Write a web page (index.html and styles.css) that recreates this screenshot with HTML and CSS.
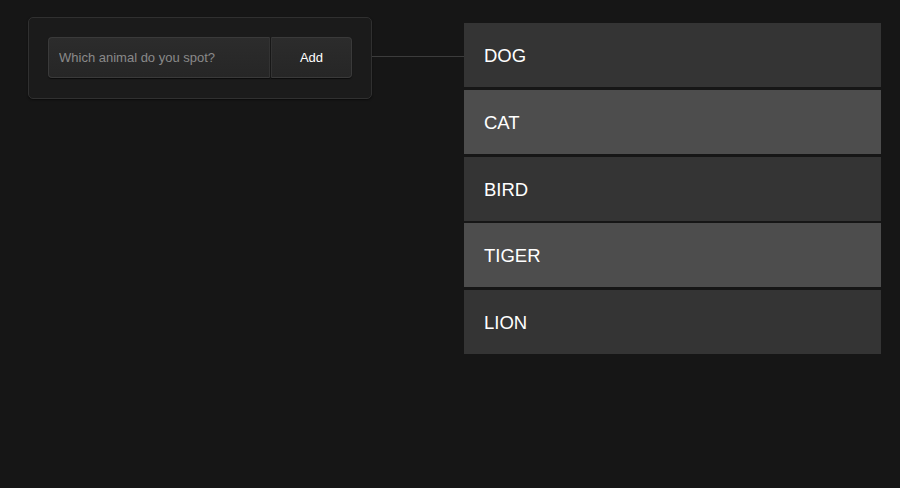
FILE: index.html
```html
<!DOCTYPE html>
<html>
<head>
<meta charset="utf-8">
<link rel="stylesheet" href="styles.css">
</head>
<body>
<div class="stage">
  <div class="panel">
    <form class="add-form" onsubmit="return false">
      <input class="field" type="text" placeholder="Which animal do you spot?">
      <button class="add-btn" type="button">Add</button>
    </form>
  </div>
  <div class="connector"></div>
  <ul class="animals">
    <li class="animal">DOG</li>
    <li class="animal alt">CAT</li>
    <li class="animal">BIRD</li>
    <li class="animal alt">TIGER</li>
    <li class="animal">LION</li>
  </ul>
</div>
</body>
</html>
```

FILE: styles.css
```css
html, body {
  margin: 0;
  padding: 0;
  background: #161616;
  font-family: "Liberation Sans", Arial, sans-serif;
}
.stage {
  display: flex;
  align-items: flex-start;
  padding: 17px 0 0 28px;
}
.panel {
  box-sizing: border-box;
  width: 344px;
  height: 82px;
  padding: 19px 19px 0 19px;
  background: #1b1b1b;
  border: 1px solid #303030;
  border-radius: 5px;
  box-shadow: 0 1px 2px rgba(0,0,0,0.5);
}
.add-form {
  display: flex;
  height: 41px;
  margin: 0;
  gap: 1px;
}
.field {
  box-sizing: border-box;
  width: 222px;
  height: 41px;
  margin: 0;
  padding: 0 10px;
  background: linear-gradient(#2c2c2c, #262626);
  border: 1px solid #3a3a3a;
  border-right-color: #333;
  border-radius: 4px 0 0 4px;
  color: #ddd;
  font-family: "Liberation Sans", Arial, sans-serif;
  font-size: 13px;
  outline: none;
  box-shadow: 0 1px 1px rgba(0,0,0,0.6);
}
.field::placeholder {
  color: #8a8a8a;
}
.add-btn {
  box-sizing: border-box;
  width: 81px;
  height: 41px;
  margin: 0;
  padding: 0;
  background: linear-gradient(#2c2c2c, #262626);
  border: 1px solid #3a3a3a;
  border-left-color: #333;
  border-radius: 0 4px 4px 0;
  color: #fff;
  font-family: "Liberation Sans", Arial, sans-serif;
  font-size: 13px;
  box-shadow: 0 1px 1px rgba(0,0,0,0.6);
}
.connector {
  width: 92px;
  height: 1px;
  margin-top: 39px;
  background: #3c3c3c;
}
.animals {
  list-style: none;
  margin: 6px 0 0 0;
  padding: 0;
  width: 417px;
  display: flex;
  flex-direction: column;
  gap: 2.75px;
}
.animal {
  box-sizing: border-box;
  height: 64px;
  display: flex;
  align-items: center;
  padding: 2px 20px 0 20px;
  background: #343434;
  color: #fff;
  font-size: 18.5px;
}
.animal.alt {
  background: #4d4d4d;
}
```
